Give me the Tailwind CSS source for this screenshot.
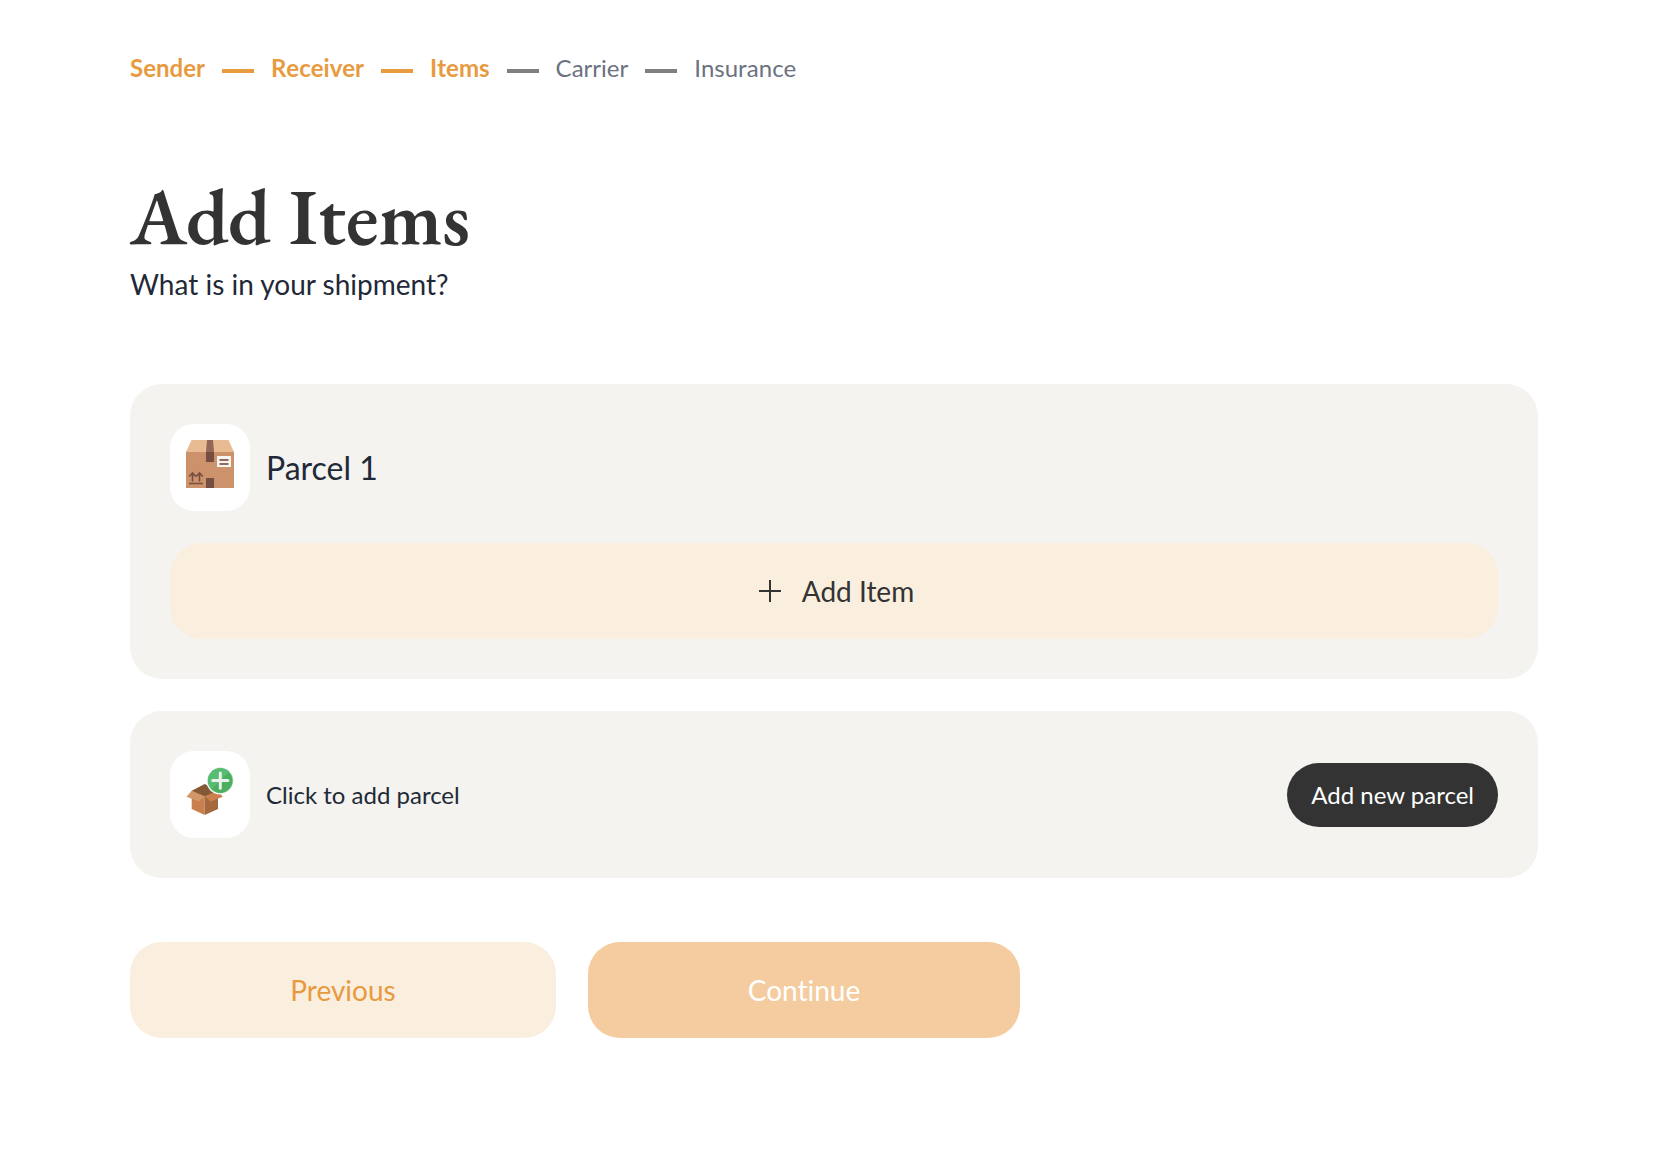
<!DOCTYPE html>
<html lang="en">
<head>
    <meta charset="UTF-8">
    <meta name="viewport" content="width=device-width, initial-scale=1.0">
    <title>Add Items</title>
    <script src="https://cdn.jsdelivr.net/npm/@tailwindcss/browser@4"></script>
</head>
<body class="bg-white text-[#1f2937] font-['Lato',sans-serif] [font-variant-ligatures:none]">
    <main class="pl-[130px] pr-[116px] pt-[52px] pb-16">
        <!-- Progress -->
        <nav aria-label="Progress">
            <ol class="flex items-center gap-[17px] text-2xl leading-8 text-[#6b7280] [font-kerning:none]">
                <li class="font-bold text-[#e89a3f]">Sender</li>
                <li class="w-8 h-1 mt-1.5 bg-[#e89a3f]" aria-hidden="true"></li>
                <li class="font-bold text-[#e89a3f]">Receiver</li>
                <li class="w-8 h-1 mt-1.5 bg-[#e89a3f]" aria-hidden="true"></li>
                <li class="font-bold text-[#e89a3f]">Items</li>
                <li class="w-8 h-1 mt-1.5 bg-[#808080]" aria-hidden="true"></li>
                <li>Carrier</li>
                <li class="w-8 h-1 mt-1.5 bg-[#808080]" aria-hidden="true"></li>
                <li>Insurance</li>
            </ol>
        </nav>

        <header class="mt-[90px]">
            <h1 class="font-['EB_Garamond','Liberation_Serif',serif] font-semibold text-[80px] leading-[84px] text-[#333333]">Add Items</h1>
            <p class="mt-2 text-[28px] leading-9">What is in your shipment?</p>
        </header>

        <!-- Parcel -->
        <section class="mt-[82px] p-10 rounded-[32px] bg-[#f4f3ef]">
            <div class="flex items-center gap-4">
                <div class="w-20 h-[87px] p-4 rounded-3xl bg-white">
                    <svg class="w-12 h-12" viewBox="0 0 48 48" aria-hidden="true">
                        <path fill="#cb926b" d="M0 11h48v37H0z"/>
                        <path fill="#e8bb92" d="M5.500 0h37L48 12H0z"/>
                        <path fill="#956759" d="M21 0h6l1 12h-8z"/>
                        <path fill="#754e41" d="M20 12h8v10h-8zM20 38h8v10h-8z"/>
                        <path fill="#f4f6f1" d="M31 16h14v11H31z"/>
                        <path fill="none" stroke="#956759" stroke-width="2" d="M33.500 20h9M33.500 24h9"/>
                        <path fill="none" stroke="#754e41" stroke-width="1.600" d="M3 43.500h14M6.500 41.500V33M3.200 36.500l3.300-3.500 3.300 3.500M13.500 41.500V33M10.200 36.500l3.300-3.500 3.300 3.500"/>
                    </svg>
                </div>
                <h2 class="text-[32px] leading-10">Parcel 1</h2>
            </div>
            <button type="button" class="mt-8 flex w-full h-24 pl-1 items-center justify-center gap-5 rounded-[32px] bg-[#faeede] text-[28px] leading-10 text-[#333333]">
                <svg class="w-6 h-6" viewBox="0 0 24 24" fill="none" stroke="currentColor" stroke-width="2" aria-hidden="true">
                    <path d="M12 1v22M1 12h22"/>
                </svg>
                Add Item
            </button>
        </section>

        <!-- New parcel -->
        <section class="mt-8 p-10 flex items-center justify-between rounded-[32px] bg-[#f4f3ef]">
            <div class="flex items-center gap-4">
                <div class="w-20 h-[87px] p-4 rounded-3xl bg-white">
                    <svg class="w-12 h-12" viewBox="0 0 48 48" aria-hidden="true">
                        <path fill="#c97f4e" d="M5.700 24l13-1v25l-13-6z"/>
                        <path fill="#a6693f" d="M18.700 23L32 24v18l-13.300 6z"/>
                        <path fill="#845a36" d="M5.700 23.700L18.700 17l13.300 6.700L18.700 29.500z"/>
                        <path fill="#d1966a" d="M5.700 23.700l13 5.500L13 34.500.5 29.700z"/>
                        <path fill="#c97f4e" d="M18.700 29.200L32 23.700l4.800 6-12.300 4.800z"/>
                        <circle cx="34.300" cy="13.600" r="14" fill="#fff"/>
                        <circle cx="34.300" cy="13.600" r="13" fill="#b9dfc4"/>
                        <circle cx="34.300" cy="13.600" r="12.300" fill="#4caf60"/>
                        <path fill="#57bd72" d="M25.600 22.300A12.300 12.300 0 0 1 43 4.900z"/>
                        <path fill="none" stroke="#eaf1ed" stroke-width="3" stroke-linecap="round" d="M34.300 6v15.200M26.700 13.600h15.200"/>
                    </svg>
                </div>
                <p class="text-2xl leading-8">Click to add parcel</p>
            </div>
            <button type="button" class="h-16 px-6 rounded-full bg-[#333333] text-2xl leading-8 text-white">Add new parcel</button>
        </section>

        <div class="mt-16 flex gap-8">
            <button type="button" class="h-24 w-[426px] rounded-[32px] bg-[#faeede] text-[28px] leading-10 text-[#e89a3f]">Previous</button>
            <button type="button" class="h-24 w-[432px] rounded-[32px] bg-[#f5cca0] text-[28px] leading-10 text-white">Continue</button>
        </div>
    </main>
</body>
</html>
